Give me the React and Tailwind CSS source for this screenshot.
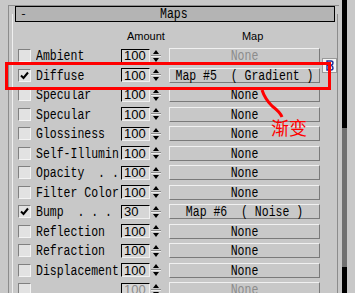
import React from 'react';

const rows = [
  { label: 'Ambient', amount: '100', map: 'None', mapDim: true },
  { label: 'Diffuse', amount: '100', map: 'Map #5  ( Gradient )', on: true },
  { label: 'Specular', amount: '100', map: 'None' },
  { label: 'Specular', amount: '100', map: 'None' },
  { label: 'Glossiness', amount: '100', map: 'None' },
  { label: 'Self-Illumin', amount: '100', map: 'None' },
  { label: 'Opacity  . .', amount: '100', map: 'None' },
  { label: 'Filter Color', amount: '100', map: 'None' },
  { label: 'Bump  . . .', amount: '30', map: 'Map #6  ( Noise )', on: true },
  { label: 'Reflection', amount: '100', map: 'None' },
  { label: 'Refraction', amount: '100', map: 'None' },
  { label: 'Displacement', amount: '100', map: 'None' },
  { label: '', amount: '100', map: 'None', mapDim: true, amountDim: true },
];

const mono = "font-['Liberation_Mono',monospace] text-[11.5px]";
const sans = "font-['Liberation_Sans',Arial,sans-serif]";

function Checkbox({ on }) {
  return (
    <div className="w-[13px] h-[13px] shrink-0 border-t border-l border-[#808080] border-b border-r border-b-[#f4f4f4] border-r-[#f4f4f4] bg-[#e2e2e2] flex items-center justify-center">
      {on && (
        <svg width="9" height="9" viewBox="0 0 9 9">
          <path d="M1 4.5 L3.5 7 L8 1.5" fill="none" stroke="#000" strokeWidth="2" />
        </svg>
      )}
    </div>
  );
}

function Spinner() {
  return (
    <div className="ml-[1px] w-[10px] h-[14px] shrink-0 flex flex-col">
      <div className="flex-1 flex items-center justify-center border-b border-[#8c8c8c]">
        <svg width="6" height="4" viewBox="0 0 6 4"><path d="M3 0 L6 4 L0 4 Z" fill="#000" /></svg>
      </div>
      <div className="flex-1 flex items-center justify-center border-t border-[#eeeeee]">
        <svg width="6" height="4" viewBox="0 0 6 4"><path d="M0 0 L6 0 L3 4 Z" fill="#000" /></svg>
      </div>
    </div>
  );
}

function Row({ row }) {
  return (
    <div className="h-[19.5px] flex items-center">
      <div className="ml-[5px]"><Checkbox on={row.on} /></div>
      <div className={`ml-[5px] w-[85px] whitespace-pre text-black leading-none scale-y-[1.2] ${mono}`}>{row.label}</div>
      <div className="w-[29px] h-[14px] shrink-0 border-t border-l border-black border-b border-r border-b-[#f0f0f0] border-r-[#f0f0f0] bg-[#d6d6d6] flex items-center pl-[2px]">
        <span className={`text-[13px] leading-none ${sans} ${row.amountDim ? 'text-[#8c8c8c]' : 'text-black'}`}>{row.amount}</span>
      </div>
      <Spinner />
      <div className="ml-[8px] w-[151px] h-[15px] shrink-0 border-t border-l border-[#f0f0f0] border-b border-r border-b-[#7a7a7a] border-r-[#7a7a7a] flex items-center justify-center">
        <span className={`whitespace-pre leading-none scale-y-[1.2] ${mono} ${row.mapDim ? 'text-[#8c8c8c]' : 'text-black'}`}>{row.map}</span>
      </div>
    </div>
  );
}

export default function App() {
  return (
    <div className="relative w-[355px] h-[293px] bg-[#c8c8c8] flex overflow-hidden select-none">
      <div className="w-[342px] flex flex-col">
        <div className="ml-[8px] mt-[5px] w-[331px] flex-1 border-l border-t border-[#8c8c8c] flex flex-col">
          <div className="relative z-10 ml-[6px] h-[16px] w-[320px] border border-black bg-[#b4b4b4] flex items-center">
            <span className={`ml-[4px] w-[20px] leading-none ${mono}`}>-</span>
            <span className={`ml-[120px] leading-none scale-y-[1.2] ${mono}`}>Maps</span>
          </div>
          <div className="-mt-[8px] ml-[3px] w-[326px] flex-1 border-l border-[#f0f0f0] border-r border-r-[#8c8c8c] pt-[8px] flex flex-col">
            <div className={`h-[24px] pt-[4px] flex items-center text-[11px] text-black ${sans}`}>
              <span className="ml-[114px]">Amount</span>
              <span className="ml-[77px]">Map</span>
            </div>
            {rows.map((row, i) => (
              <Row key={i} row={row} />
            ))}
          </div>
        </div>
      </div>
      <div className="w-[5px] flex flex-col">
        <div className="h-[128px] bg-black" />
        <div className="h-[139px] bg-[#707070]" />
        <div className="flex-1 bg-black" />
      </div>

      {/* lock button between Ambient and Diffuse */}
      <div className="absolute left-[322px] top-[58px] w-[15px] h-[15px] border border-[#9a9a9a] bg-[#f4f4f4] flex items-center justify-center">
        <svg width="9" height="11" viewBox="0 0 9 11">
          <path d="M2 1 H6 Q8 1 8 3 Q8 5 6 5.3 Q8 5.8 8 8 Q8 10 6 10 H2 Z M2 5.4 H6" fill="none" stroke="#1a2a9a" strokeWidth="1.4" />
        </svg>
      </div>

      {/* red annotation */}
      <div className="absolute left-[5px] top-[62px] w-[326px] h-[28px] border-[3px] border-[#ff0000]" />
      <svg className="absolute left-0 top-0" width="355" height="293" viewBox="0 0 355 293">
        <path d="M262 90 Q265 99 272 106 Q280 112 282 117" fill="none" stroke="#ff0000" strokeWidth="3" />
      </svg>
      <div className="absolute left-[271px] top-[118px] text-[18px] leading-none text-[#ff0000] font-['Noto_Sans_CJK_SC',sans-serif]">渐变</div>
    </div>
  );
}
